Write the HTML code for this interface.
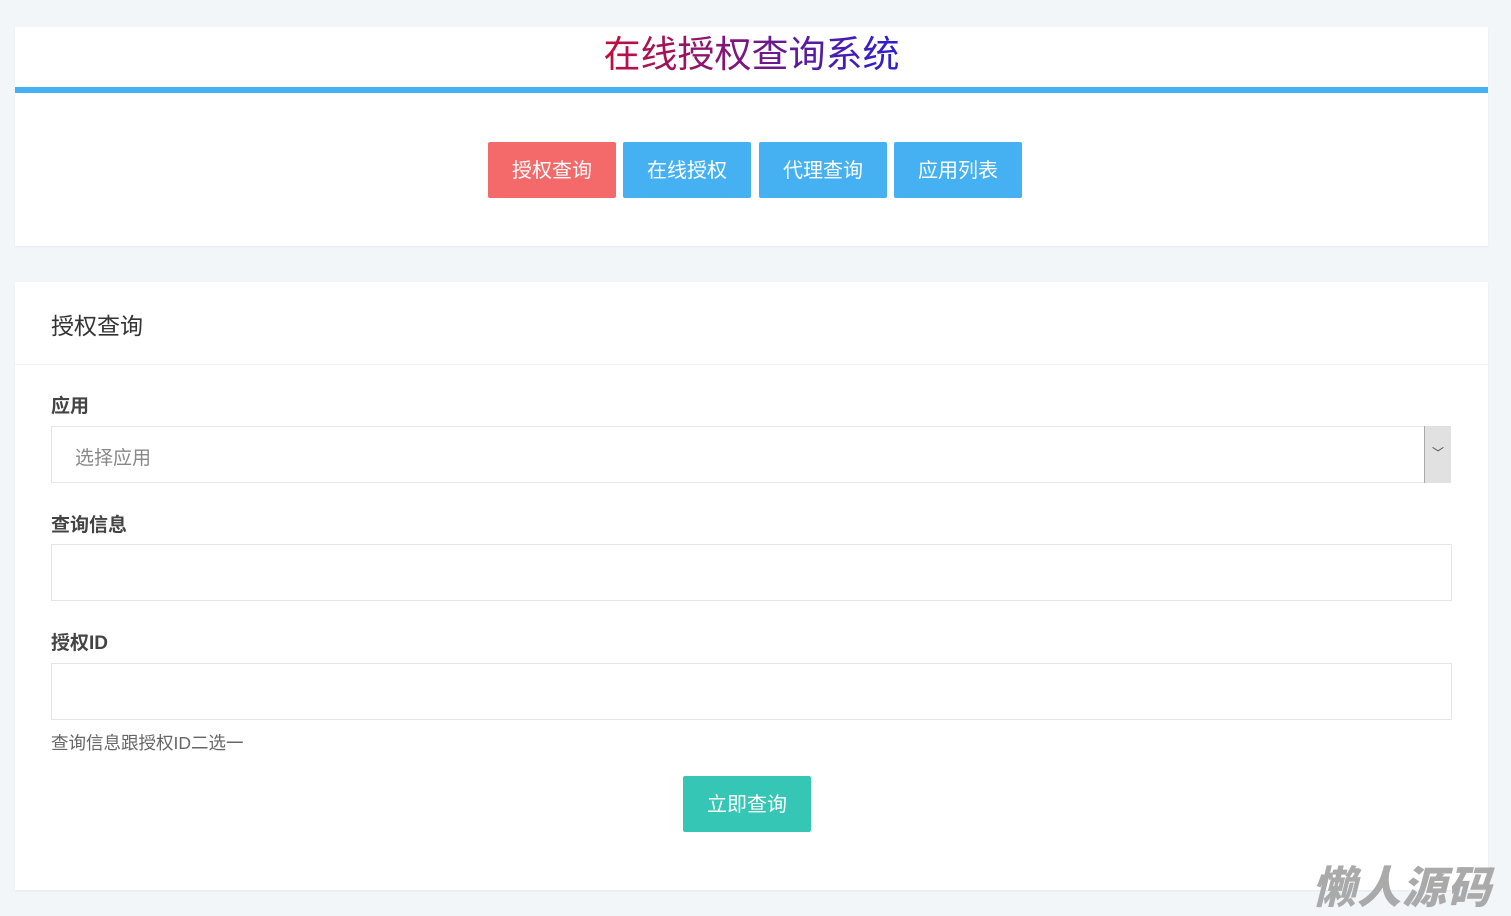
<!DOCTYPE html><html><head><meta charset="utf-8"><style>
body{margin:0;background:#f3f6f9;font-family:"Liberation Sans","Noto Sans CJK SC",sans-serif;width:1511px;height:915px;overflow:hidden;position:relative}
.card{position:absolute;left:15px;width:1473px;background:#fff;box-shadow:0 1px 2px rgba(0,0,0,.05)}
.t{position:absolute;left:0;right:0;top:30px;text-align:center;font-size:37px;line-height:50px;}
.t span{background:linear-gradient(90deg,#c0103a,#2a1fd0);-webkit-background-clip:text;background-clip:text;color:transparent}
.bar{position:absolute;left:0;right:0;top:60px;height:6px;background:#45b0f2}
.b{position:absolute;top:115px;width:128px;height:56px;line-height:58px;text-align:center;color:#fff;font-size:20px;background:#45b0f2;border-radius:2px}
.lab{position:absolute;left:36px;font-size:19px;font-weight:bold;color:#444}
.in{position:absolute;left:36px;width:1399px;height:57px;border:1px solid #e5e5e5;box-sizing:border-box}
</style></head><body>
<div class="card" style="top:27px;height:219px">
<div class="t" style="top:3px"><span>在线授权查询系统</span></div>
<div class="bar"></div>
<div class="b" style="left:473px;background:#f46a6a">授权查询</div>
<div class="b" style="left:608px">在线授权</div>
<div class="b" style="left:744px">代理查询</div>
<div class="b" style="left:879px">应用列表</div>
</div>
<div class="card" style="top:282px;height:608px">
<div style="position:absolute;left:36px;top:25px;font-size:23px;color:#333">授权查询</div>
<div style="position:absolute;left:0;right:0;top:82px;height:1px;background:#f2f2f2"></div>
<div class="lab" style="top:109px">应用</div>
<div class="in" style="top:144px;width:1400px"><span style="position:absolute;left:23px;top:16px;font-size:19px;color:#888">选择应用</span>
<div style="position:absolute;right:-1px;top:-1px;width:26px;height:57px;background:#e1e1e1;border-left:1px solid #aaa;text-align:center;line-height:54px;font-size:12px;color:#444">﹀</div></div>
<div class="lab" style="top:228px">查询信息</div>
<div class="in" style="top:262px;width:1401px"></div>
<div class="lab" style="top:346px">授权ID</div>
<div class="in" style="top:381px;width:1401px"></div>
<div style="position:absolute;left:36px;top:448px;font-size:17.5px;color:#666">查询信息跟授权ID二选一</div>
<div class="b" style="left:668px;top:494px;width:128px;height:56px;background:#36c6b6">立即查询</div>
</div>
<div style="position:absolute;left:1312px;top:852px;font-size:44px;font-weight:900;font-style:italic;color:#aaa;letter-spacing:1px">懒人源码</div>
</body></html>
